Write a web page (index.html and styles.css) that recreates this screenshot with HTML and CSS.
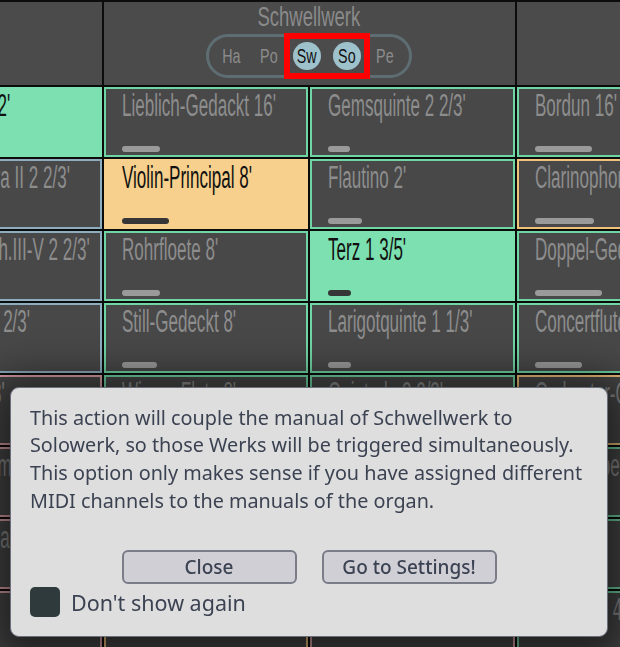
FILE: index.html
```html
<!DOCTYPE html>
<html>
<head>
<meta charset="utf-8">
<link rel="stylesheet" href="styles.css">
</head>
<body>
<div class="board">
  <div class="header">
    <div class="hcell"></div>
    <div class="hcell werk">
      <div class="title"><span>Schwellwerk</span></div>
      <div class="pill">
        <div class="man"><span>Ha</span></div>
        <div class="man"><span>Po</span></div>
        <div class="group">
          <div class="man on"><span>Sw</span></div>
          <div class="man on"><span>So</span></div>
        </div>
        <div class="man"><span>Pe</span></div>
      </div>
    </div>
    <div class="hcell"></div>
  </div>
  <div class="grid">
    <div class="cell green active"><span class="name">Schwiegel 2'</span><i class="bar" style="width:40px"></i></div>
    <div class="cell green"><span class="name">Lieblich-Gedackt 16'</span><i class="bar" style="width:38px"></i></div>
    <div class="cell green"><span class="name">Gemsquinte 2 2/3'</span><i class="bar" style="width:22px"></i></div>
    <div class="cell green"><span class="name">Bordun 16'</span><i class="bar" style="width:57px"></i></div>

    <div class="cell blue"><span class="name">Sesquialtera II 2 2/3'</span><i class="bar" style="width:40px"></i></div>
    <div class="cell orange active"><span class="name">Violin-Principal 8'</span><i class="bar" style="width:47px"></i></div>
    <div class="cell green"><span class="name">Flautino 2'</span><i class="bar" style="width:34px"></i></div>
    <div class="cell orange"><span class="name">Clarinophon 8'</span><i class="bar" style="width:59px"></i></div>

    <div class="cell blue"><span class="name">Mixtur 4fach.III-V 2 2/3'</span><i class="bar" style="width:40px"></i></div>
    <div class="cell green"><span class="name">Rohrfloete 8'</span><i class="bar" style="width:38px"></i></div>
    <div class="cell green active"><span class="name">Terz 1 3/5'</span><i class="bar" style="width:23px"></i></div>
    <div class="cell green"><span class="name">Doppel-Gedackt 8'</span><i class="bar" style="width:67px"></i></div>

    <div class="cell blue"><span class="name">Nasard II 2 2/3'</span><i class="bar" style="width:40px"></i></div>
    <div class="cell green"><span class="name">Still-Gedeckt 8'</span><i class="bar" style="width:35px"></i></div>
    <div class="cell green"><span class="name">Larigotquinte 1 1/3'</span><i class="bar" style="width:23px"></i></div>
    <div class="cell green"><span class="name">Concertflute 4'</span><i class="bar" style="width:47px"></i></div>

    <div class="cell pink"><span class="name">Trompete 8'</span><i class="bar" style="width:40px"></i></div>
    <div class="cell green"><span class="name">Wiener Flute 8'</span><i class="bar" style="width:36px"></i></div>
    <div class="cell green"><span class="name">Quintade 2 2/3'</span><i class="bar" style="width:30px"></i></div>
    <div class="cell orange"><span class="name">Orchester-Oboe 8'</span><i class="bar" style="width:50px"></i></div>

    <div class="cell pink"><span class="name">Gedacktpommer 8'</span><i class="bar" style="width:40px"></i></div>
    <div class="cell green"><span class="name">Principal 4'</span><i class="bar" style="width:36px"></i></div>
    <div class="cell green"><span class="name">Salicet 4'</span><i class="bar" style="width:30px"></i></div>
    <div class="cell green"><span class="name">Traversfloete 8'</span><i class="bar" style="width:50px"></i></div>

    <div class="cell pink"><span class="name">Vox humana 8'</span><i class="bar" style="width:40px"></i></div>
    <div class="cell orange"><span class="name">Oboe 8'</span><i class="bar" style="width:36px"></i></div>
    <div class="cell pink"><span class="name">Trompette 8'</span><i class="bar" style="width:30px"></i></div>
    <div class="cell green"><span class="name">Fugara 4'</span><i class="bar" style="width:50px"></i></div>

    <div class="cell pink"><span class="name">Tuba 8'</span><i class="bar" style="width:40px"></i></div>
    <div class="cell orange"><span class="name">Cornett 8'</span><i class="bar" style="width:36px"></i></div>
    <div class="cell pink"><span class="name">Posaune 16'</span><i class="bar" style="width:30px"></i></div>
    <div class="cell green"><span class="name">Salicional 4'</span><i class="bar" style="width:50px"></i></div>
  </div>
</div>

<div class="dialog">
  <p class="msg">This action will couple the manual of Schwellwerk to Solowerk, so those Werks will be triggered simultaneously. This option only makes sense if you have assigned different MIDI channels to the manuals of the organ.</p>
  <div class="actions">
    <button class="btn">Close</button>
    <button class="btn">Go to Settings!</button>
  </div>
  <label class="check"><span class="box"></span><span>Don't show again</span></label>
</div>
</body>
</html>
```

FILE: styles.css
```css
html, body {
  margin: 0;
  padding: 0;
  background: #0c0c0c;
  overflow: hidden;
  width: 620px;
  height: 647px;
}

.board {
  margin-left: -103px;
  width: 824px;
  padding-top: 2px;
  font-family: "Liberation Sans", Arial, sans-serif;
}

.header {
  display: grid;
  grid-template-columns: 204.5px 411px 204.5px;
  column-gap: 2px;
  height: 83px;
  margin-bottom: 2px;
}

.hcell {
  background: #4b4b4b;
}

.werk {
  display: flex;
  flex-direction: column;
  align-items: center;
  padding-top: 1px;
}

.title {
  height: 28px;
  line-height: 28px;
  font-size: 28px;
  color: #8a8a8a;
}

.title span {
  display: inline-block;
  transform: scaleX(0.66);
}

.pill {
  margin-top: 3px;
  height: 44px;
  box-sizing: border-box;
  border: 3px solid #5d6d72;
  border-radius: 22px;
  display: flex;
  align-items: center;
  gap: 10px;
  padding: 0 10px 0 8px;
}

.group {
  display: flex;
  gap: 12px;
  outline: 6px solid #ff0000;
  outline-offset: 3px;
}

.man {
  width: 28px;
  height: 28px;
  border-radius: 50%;
  display: flex;
  align-items: center;
  justify-content: center;
  font-size: 21px;
  color: #8b8b8b;
}

.man span {
  display: inline-block;
  transform: scaleX(0.68);
}

.man.on {
  background: #9ec2cb;
  color: #111;
}

.grid {
  display: grid;
  grid-template-columns: repeat(4, 204.5px);
  grid-auto-rows: 70px;
  gap: 2px;
}

.cell {
  box-sizing: border-box;
  border: 2px solid #6fd3a3;
  background: #484848;
  padding: 1px 16px 3px;
  display: flex;
  flex-direction: column;
  justify-content: space-between;
  align-items: flex-start;
}

.cell.green { border-color: #70d5a4; }
.cell.blue { border-color: #8eaec0; }
.cell.orange { border-color: #f0c27a; }
.cell.pink { border-color: #dca1a8; }

.cell.green.active { background: #7ce0b0; border-color: #7ce0b0; }
.cell.orange.active { background: #f6d08c; border-color: #f6d08c; }

.name {
  display: inline-block;
  white-space: nowrap;
  font-size: 31px;
  line-height: 31px;
  color: #8d8d8d;
  transform: scaleX(0.55);
  transform-origin: left center;
}

.active .name { color: #111; }

.bar {
  display: block;
  height: 6px;
  border-radius: 3px;
  background: #9a9a9a;
}

.active .bar { background: #363636; }

.dialog {
  position: fixed;
  left: 10px;
  top: 387px;
  width: 598px;
  height: 250px;
  box-sizing: border-box;
  background: #dedede;
  border: 1.5px solid #6b6f7b;
  border-radius: 9px;
  padding: 15.5px 15px 0 19px;
  font-family: "Noto Sans", "Open Sans", sans-serif;
  color: #3b4252;
  box-shadow: 0 8px 40px 18px rgba(0, 0, 0, 0.55);
}

.msg {
  margin: 0;
  font-size: 19.8px;
  line-height: 27.7px;
}

.actions {
  display: flex;
  justify-content: center;
  gap: 25px;
  margin-top: 36px;
  padding-right: 4px;
}

.btn {
  width: 175px;
  height: 34px;
  box-sizing: border-box;
  border: 2px solid #7a7c88;
  border-radius: 6px;
  background: #d1cfd6;
  font-family: "Noto Sans", "Open Sans", sans-serif;
  font-size: 19px;
  font-weight: 500;
  color: #3b4252;
  padding: 0;
}

.check {
  display: flex;
  align-items: center;
  gap: 11px;
  margin-top: 3px;
  font-size: 21.5px;
}

.box {
  width: 30px;
  height: 30px;
  border-radius: 5px;
  background: #2f3a3d;
}
```
